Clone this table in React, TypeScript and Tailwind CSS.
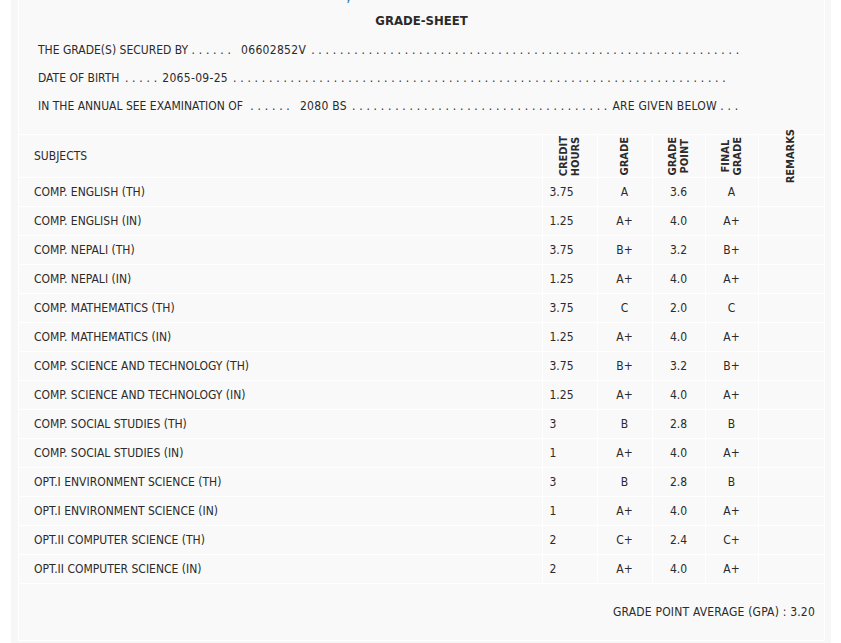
const subjects = [
  { name: 'COMP. ENGLISH (TH)', ch: '3.75', grade: 'A', gp: '3.6', fg: 'A' },
  { name: 'COMP. ENGLISH (IN)', ch: '1.25', grade: 'A+', gp: '4.0', fg: 'A+' },
  { name: 'COMP. NEPALI (TH)', ch: '3.75', grade: 'B+', gp: '3.2', fg: 'B+' },
  { name: 'COMP. NEPALI (IN)', ch: '1.25', grade: 'A+', gp: '4.0', fg: 'A+' },
  { name: 'COMP. MATHEMATICS (TH)', ch: '3.75', grade: 'C', gp: '2.0', fg: 'C' },
  { name: 'COMP. MATHEMATICS (IN)', ch: '1.25', grade: 'A+', gp: '4.0', fg: 'A+' },
  { name: 'COMP. SCIENCE AND TECHNOLOGY (TH)', ch: '3.75', grade: 'B+', gp: '3.2', fg: 'B+' },
  { name: 'COMP. SCIENCE AND TECHNOLOGY (IN)', ch: '1.25', grade: 'A+', gp: '4.0', fg: 'A+' },
  { name: 'COMP. SOCIAL STUDIES (TH)', ch: '3', grade: 'B', gp: '2.8', fg: 'B' },
  { name: 'COMP. SOCIAL STUDIES (IN)', ch: '1', grade: 'A+', gp: '4.0', fg: 'A+' },
  { name: 'OPT.I ENVIRONMENT SCIENCE (TH)', ch: '3', grade: 'B', gp: '2.8', fg: 'B' },
  { name: 'OPT.I ENVIRONMENT SCIENCE (IN)', ch: '1', grade: 'A+', gp: '4.0', fg: 'A+' },
  { name: 'OPT.II COMPUTER SCIENCE (TH)', ch: '2', grade: 'C+', gp: '2.4', fg: 'C+' },
  { name: 'OPT.II COMPUTER SCIENCE (IN)', ch: '2', grade: 'A+', gp: '4.0', fg: 'A+' },
];

function Dots({ n, className = '' }: { n: number; className?: string }) {
  return <span className={`tracking-[0.17px] ${className}`}>{Array(n).fill('.').join(' ')}</span>;
}

function Val({ children, className = '' }: { children: React.ReactNode; className?: string }) {
  return <span className={`tracking-[0.3px] ${className}`}>{children}</span>;
}

export default function App() {
  return (
    <div className="min-h-screen bg-white font-['DejaVu_Sans_Condensed','DejaVu_Sans',sans-serif] text-[12px] text-[#2b2b2b]">
      <div className="ml-[11px] w-[820px] bg-[#f7f7f7] pl-[7px] pr-[6px] pb-4">
        <div className="overflow-hidden border-x border-white bg-[#f9f9f9]">
          {/* tail of the line above, cut off by the viewport */}
          <div className="flex h-[3px] items-end overflow-hidden pl-[326px]">
            <span className="text-[13px] leading-none text-[#337ab7]">y</span>
          </div>

          <h2 className="mt-[8px] text-center text-[13px] font-bold leading-5">GRADE-SHEET</h2>

          <div className="mt-[5px] whitespace-nowrap pl-[19px] leading-[28px]">
            <p>
              THE GRADE(S) SECURED BY <Dots n={6} />
              <Val className="ml-[10px] mr-[5px]">06602852V</Val>
              <Dots n={60} />
            </p>
            <p>
              DATE OF BIRTH <Dots n={5} className="ml-[2px]" />
              <Val className="ml-[5px] mr-[5px]">2065-09-25</Val>
              <Dots n={69} />
            </p>
            <p>
              IN THE ANNUAL SEE EXAMINATION OF <Dots n={6} className="ml-[4px]" />
              <Val className="ml-[10px] mr-[5px]">2080 BS</Val>
              <Dots n={36} />
              <span className="ml-[5px] tracking-[0.2px]">ARE GIVEN BELOW</span> <Dots n={3} />
            </p>
          </div>

          <table className="mt-[14px] w-full table-fixed border-collapse">
            <colgroup>
              <col className="w-[523px]" />
              <col className="w-[55px]" />
              <col className="w-[55px]" />
              <col className="w-[53px]" />
              <col className="w-[53px]" />
              <col />
            </colgroup>
            <thead>
              <tr className="h-[43px] border-y border-white">
                <th className="pl-[15px] text-left font-normal">SUBJECTS</th>
                {[
                  ['CREDIT', 'HOURS'],
                  ['GRADE'],
                  ['GRADE', 'POINT'],
                  ['FINAL', 'GRADE'],
                  ['REMARKS'],
                ].map((h, i) => (
                  <th key={i} className="border-l border-white p-0">
                    <div className="flex h-[42px] items-center justify-center">
                      <span className="rotate-180 text-[11px] font-bold leading-[12px] [writing-mode:vertical-rl]">
                        {h.map((l, j) => (
                          <span key={j} className="block">
                            {l}
                          </span>
                        ))}
                      </span>
                    </div>
                  </th>
                ))}
              </tr>
            </thead>
            <tbody>
              {subjects.map((s) => (
                <tr key={s.name} className="h-[29px] border-b border-white">
                  <td className="pl-[15px]">{s.name}</td>
                  <td className="border-l border-white pl-[7px]">{s.ch}</td>
                  <td className="border-l border-white text-center">{s.grade}</td>
                  <td className="border-l border-white text-center">{s.gp}</td>
                  <td className="border-l border-white text-center">{s.fg}</td>
                  <td className="border-l border-white"></td>
                </tr>
              ))}
              <tr className="h-[57px] border-b border-white">
                <td colSpan={6} className="pr-[9px] text-right tracking-[0.2px]">
                  GRADE POINT AVERAGE (GPA) : 3.20
                </td>
              </tr>
            </tbody>
          </table>
        </div>
      </div>
    </div>
  );
}
